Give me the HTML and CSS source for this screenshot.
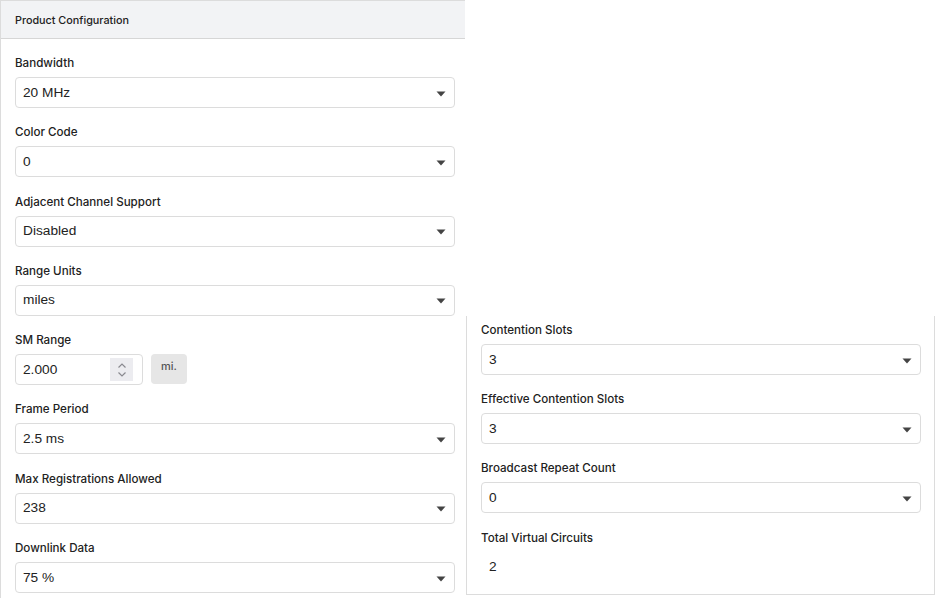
FILE: index.html
```html
<!DOCTYPE html>
<html>
<head>
<meta charset="utf-8">
<link rel="stylesheet" href="styles.css">
</head>
<body>
<div class="page">
  <section class="panel-left">
    <div class="panel-head">Product Configuration</div>
    <div class="panel-body">
      <div class="group"><div class="label">Bandwidth</div><div class="select"><span>20 MHz</span><svg class="caret" width="10" height="6" viewBox="0 0 10 6"><path d="M0.5 0.5h9l-4.5 5z" fill="#444"/></svg></div></div>
      <div class="group"><div class="label">Color Code</div><div class="select"><span>0</span><svg class="caret" width="10" height="6" viewBox="0 0 10 6"><path d="M0.5 0.5h9l-4.5 5z" fill="#444"/></svg></div></div>
      <div class="group"><div class="label">Adjacent Channel Support</div><div class="select"><span>Disabled</span><svg class="caret" width="10" height="6" viewBox="0 0 10 6"><path d="M0.5 0.5h9l-4.5 5z" fill="#444"/></svg></div></div>
      <div class="group"><div class="label">Range Units</div><div class="select"><span>miles</span><svg class="caret" width="10" height="6" viewBox="0 0 10 6"><path d="M0.5 0.5h9l-4.5 5z" fill="#444"/></svg></div></div>
      <div class="group"><div class="label">SM Range</div>
        <div class="range-row">
          <div class="number"><span>2.000</span>
            <div class="spin"><svg width="10" height="16" viewBox="0 0 10 16"><path d="M1.5 5.5l3.5-3.5 3.5 3.5M1.5 10.5l3.5 3.5 3.5-3.5" fill="none" stroke="#8a8a90" stroke-width="1.2"/></svg></div>
          </div>
          <div class="unit">mi.</div>
        </div>
      </div>
      <div class="group"><div class="label">Frame Period</div><div class="select"><span>2.5 ms</span><svg class="caret" width="10" height="6" viewBox="0 0 10 6"><path d="M0.5 0.5h9l-4.5 5z" fill="#444"/></svg></div></div>
      <div class="group"><div class="label">Max Registrations Allowed</div><div class="select"><span>238</span><svg class="caret" width="10" height="6" viewBox="0 0 10 6"><path d="M0.5 0.5h9l-4.5 5z" fill="#444"/></svg></div></div>
      <div class="group"><div class="label">Downlink Data</div><div class="select"><span>75 %</span><svg class="caret" width="10" height="6" viewBox="0 0 10 6"><path d="M0.5 0.5h9l-4.5 5z" fill="#444"/></svg></div></div>
    </div>
  </section>
  <section class="panel-right">
    <div class="group"><div class="label">Contention Slots</div><div class="select"><span>3</span><svg class="caret" width="10" height="6" viewBox="0 0 10 6"><path d="M0.5 0.5h9l-4.5 5z" fill="#444"/></svg></div></div>
    <div class="group"><div class="label">Effective Contention Slots</div><div class="select"><span>3</span><svg class="caret" width="10" height="6" viewBox="0 0 10 6"><path d="M0.5 0.5h9l-4.5 5z" fill="#444"/></svg></div></div>
    <div class="group"><div class="label">Broadcast Repeat Count</div><div class="select"><span>0</span><svg class="caret" width="10" height="6" viewBox="0 0 10 6"><path d="M0.5 0.5h9l-4.5 5z" fill="#444"/></svg></div></div>
    <div class="group last"><div class="label">Total Virtual Circuits</div><div class="static">2</div></div>
  </section>
</div>
</body>
</html>
```

FILE: styles.css
```css
html, body {
  margin: 0;
  padding: 0;
  background: #fff;
  width: 936px;
  height: 598px;
  overflow: hidden;
}
.page {
  display: flex;
  align-items: flex-start;
  font-family: Inter, "Noto Sans", sans-serif;
  color: #222;
}
.panel-left {
  width: 465px;
  height: 598px;
  border-top: 1px solid #dcdcdc;
  border-left: 1px solid #dcdcdc;
  box-sizing: border-box;
  flex: none;
}
.panel-head {
  height: 37px;
  background: #f2f3f5;
  border-bottom: 1px solid #d6d6d6;
  font-size: 10.8px;
  font-weight: 500;
  line-height: 39px;
  padding-left: 14px;
  color: #222;
}
.panel-body {
  padding: 16px 10px 0 14px;
}
.group {
  margin-bottom: 16.3px;
}
.label {
  font-size: 11.6px;
  font-weight: 500;
  line-height: 16px;
  height: 14px;
  margin-bottom: 8px;
  color: #222;
}
.select {
  width: 440px;
  height: 31px;
  box-sizing: border-box;
  border: 1px solid #dcdcdc;
  border-radius: 4px;
  display: flex;
  align-items: center;
  justify-content: space-between;
  padding: 0 8px 1px 7px;
  font-family: "Liberation Sans", Arial, sans-serif;
  font-size: 13.7px;
  color: #222;
}
.caret {
  display: block;
  margin-top: 3px;
}
.range-row {
  display: flex;
  gap: 8px;
  align-items: flex-start;
}
.number {
  width: 128px;
  height: 31px;
  box-sizing: border-box;
  border: 1px solid #dcdcdc;
  border-radius: 4px;
  display: flex;
  align-items: center;
  justify-content: space-between;
  padding: 0 9px 0 7px;
  font-family: "Liberation Sans", Arial, sans-serif;
  font-size: 13.7px;
  color: #222;
}
.spin {
  width: 23px;
  height: 23px;
  background: #ececf0;
  display: flex;
  align-items: center;
  justify-content: center;
}
.spin svg {
  display: block;
}
.unit {
  width: 36px;
  height: 30px;
  background: #e6e6e6;
  border-radius: 4px;
  font-size: 11px;
  font-weight: 500;
  color: #555;
  text-align: center;
  line-height: 14px;
  padding-top: 5px;
  box-sizing: border-box;
}
.panel-right {
  margin-top: 316px;
  margin-left: 1px;
  width: 469px;
  height: 279px;
  box-sizing: border-box;
  border-left: 1px solid #dcdcdc;
  border-right: 1px solid #dcdcdc;
  border-bottom: 1px solid #dcdcdc;
  padding: 6px 13px 0 14px;
  flex: none;
}
.panel-right .group {
  margin-bottom: 16px;
}
.panel-right .group.last {
  margin-bottom: 0;
  padding-top: 1px;
}
.static {
  font-family: "Liberation Sans", Arial, sans-serif;
  font-size: 13.7px;
  padding-left: 8px;
  line-height: 16px;
  margin-top: 15px;
  color: #222;
}
```
